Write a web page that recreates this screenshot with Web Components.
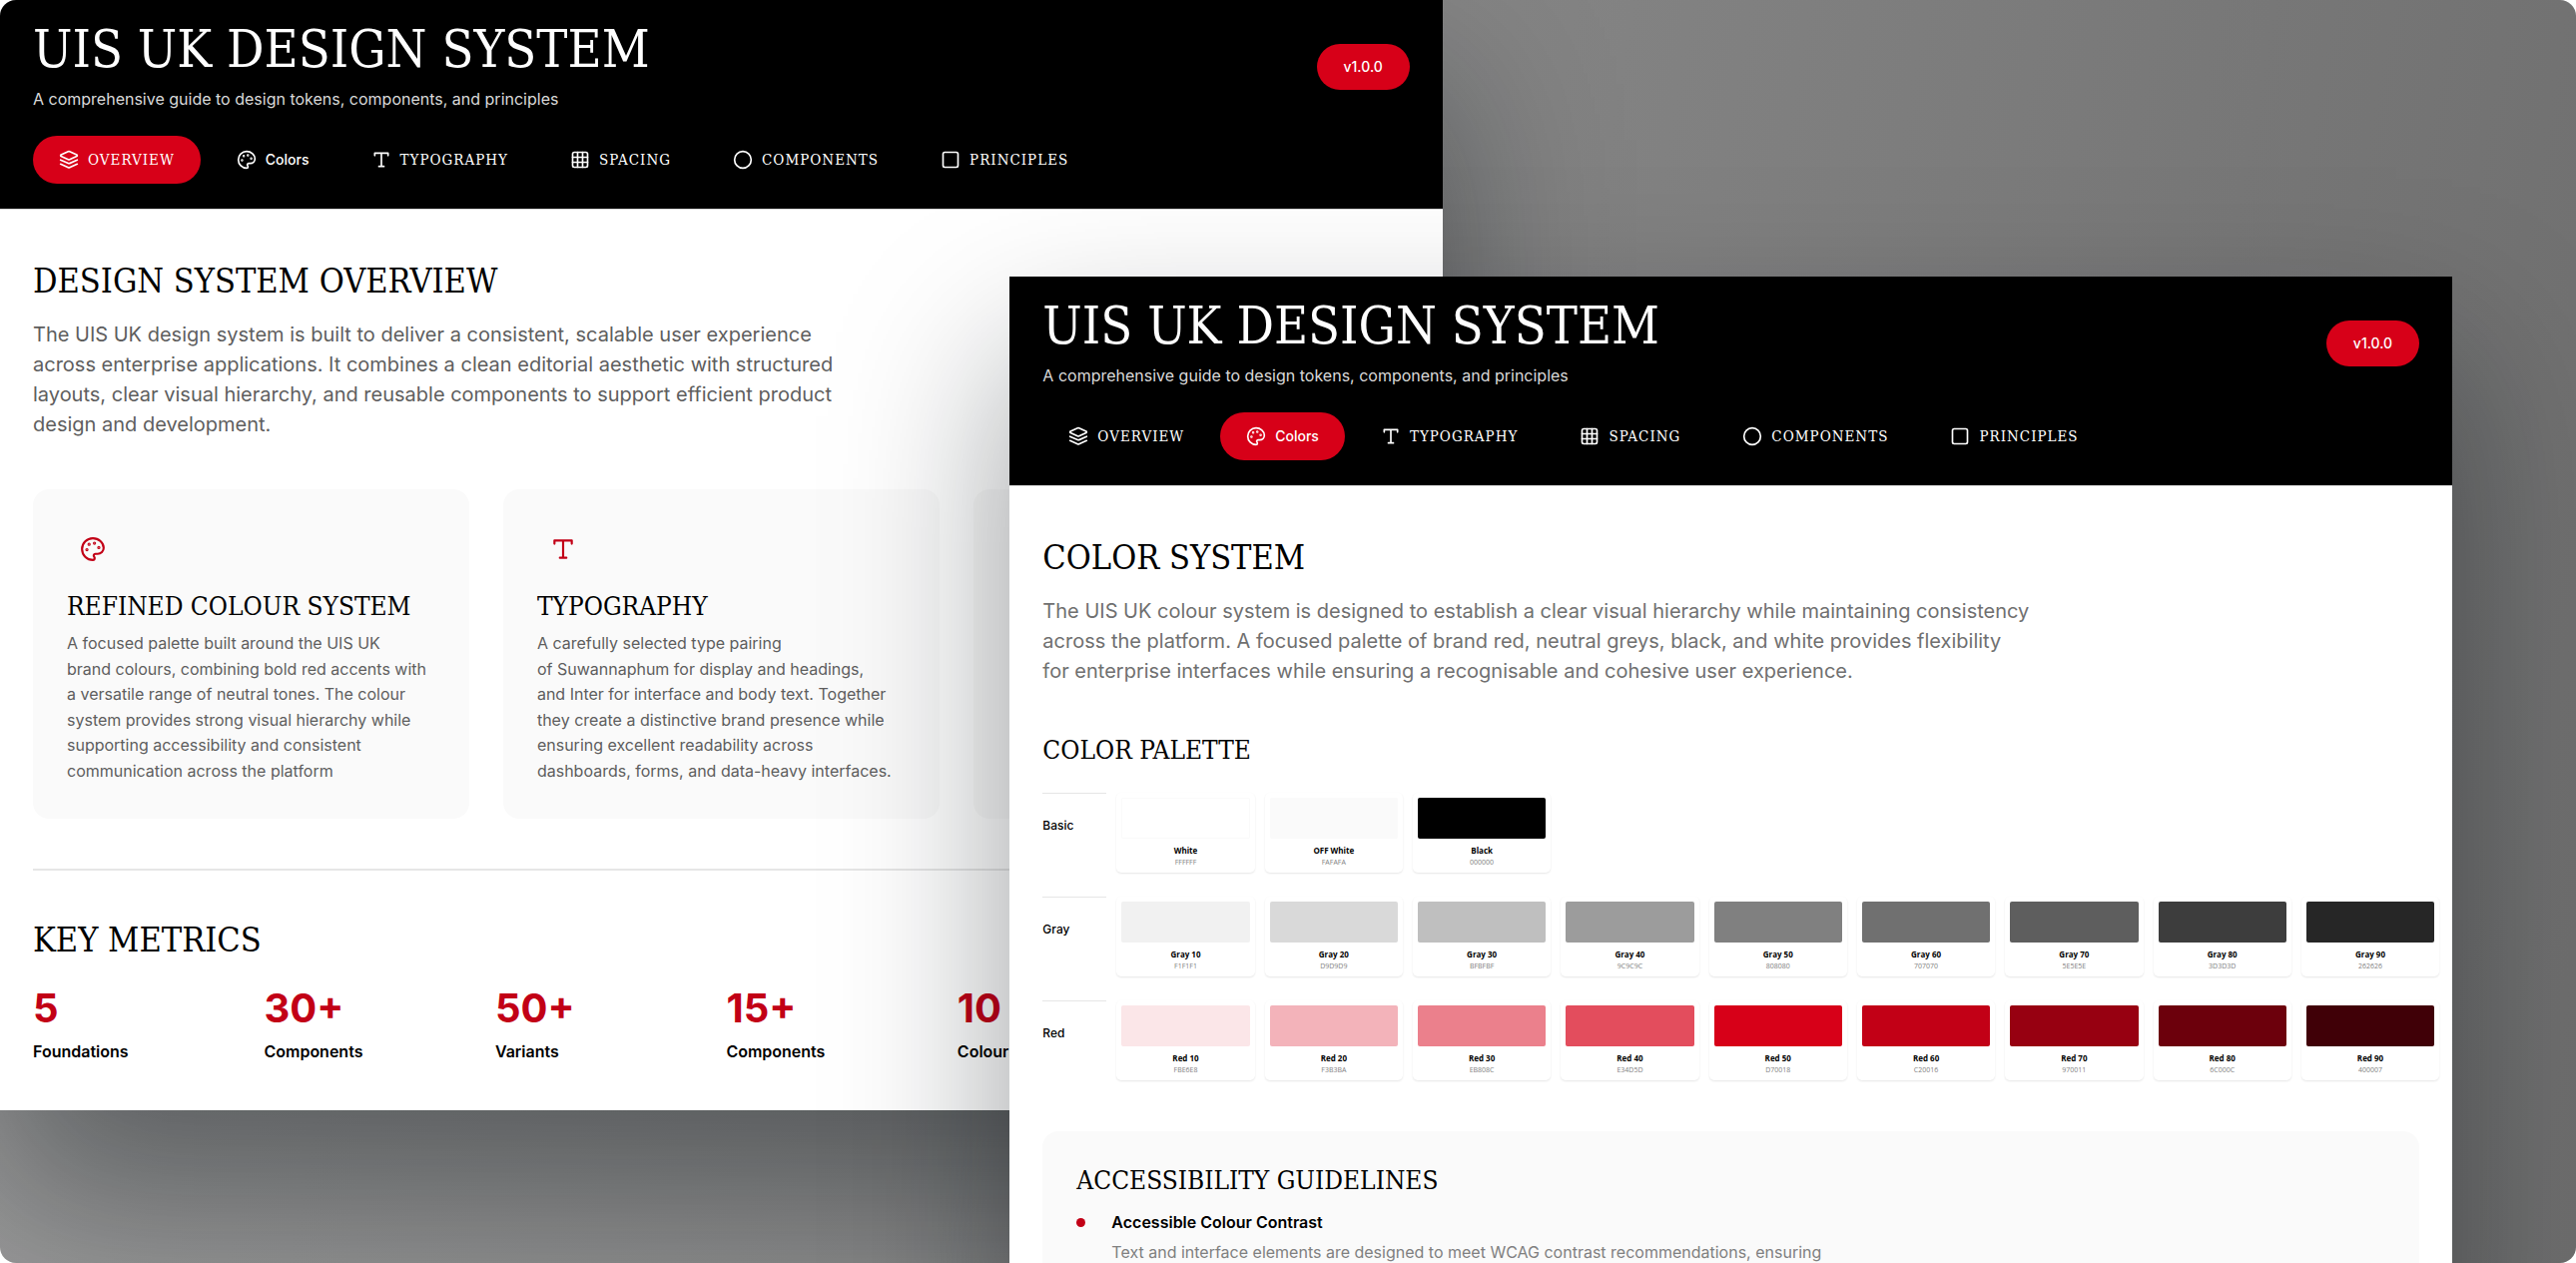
<!DOCTYPE html>
<html lang="en">
<head>
<meta charset="utf-8">
<title>UIS UK Design System</title>
<style>
html, body {
  margin: 0;
  height: 100%;
  background: #FFFFFF;
}

body {
  --slab: "DejaVu Serif Condensed", "DejaVu Serif", serif;
  --red: #D70018;
  --red-dark: #C20016;
  font-family: Inter, "Liberation Sans", sans-serif;
  color: #000000;
}
</style>
</head>
<body>

<ds-stage>
  <ds-window class="back">
    <ds-header active="overview"></ds-header>
    <ds-body>
      <ds-intro heading="DESIGN SYSTEM OVERVIEW">The UIS UK design system is built to deliver a consistent, scalable user experience across enterprise applications. It combines a clean editorial aesthetic with structured layouts, clear visual hierarchy, and reusable components to support efficient product design and development.</ds-intro>
      <ds-features>
        <ds-feature icon="palette" heading="REFINED COLOUR SYSTEM">A focused palette built around the UIS UK brand&nbsp;colours, combining bold red accents with a&nbsp;versatile range of neutral tones. The colour system provides strong visual hierarchy while supporting accessibility and consistent communication across the platform</ds-feature>
        <ds-feature icon="type" heading="TYPOGRAPHY">A carefully selected type pairing of&nbsp;Suwannaphum for display and headings, and&nbsp;Inter for interface and body text. Together they create a distinctive brand presence while ensuring excellent readability across dashboards, forms, and data-heavy interfaces.</ds-feature>
        <ds-feature icon="grid"></ds-feature>
      </ds-features>
      <ds-metrics heading="KEY METRICS">
        <ds-metric value="5">Foundations</ds-metric>
        <ds-metric value="30+">Components</ds-metric>
        <ds-metric value="50+">Variants</ds-metric>
        <ds-metric value="15+">Components</ds-metric>
        <ds-metric value="10">Colours</ds-metric>
      </ds-metrics>
    </ds-body>
  </ds-window>

  <ds-window class="front">
    <ds-header active="colors"></ds-header>
    <ds-body>
      <ds-intro wide heading="COLOR SYSTEM">The UIS UK colour system is designed to establish a clear visual hierarchy while maintaining consistency across the platform. A focused palette of brand red, neutral greys, black, and white provides flexibility for&nbsp;enterprise interfaces while ensuring a recognisable and cohesive user experience.</ds-intro>
      <ds-palette heading="COLOR PALETTE">
        <ds-palette-row label="Basic" colors="White:FFFFFF,OFF White:FAFAFA,Black:000000"></ds-palette-row>
        <ds-palette-row label="Gray" colors="Gray 10:F1F1F1,Gray 20:D9D9D9,Gray 30:BFBFBF,Gray 40:9C9C9C,Gray 50:808080,Gray 60:707070,Gray 70:5E5E5E,Gray 80:3D3D3D,Gray 90:262626"></ds-palette-row>
        <ds-palette-row label="Red" colors="Red 10:FBE6E8,Red 20:F3B3BA,Red 30:EB808C,Red 40:E34D5D,Red 50:D70018,Red 60:C20016,Red 70:970011,Red 80:6C000C,Red 90:400007"></ds-palette-row>
      </ds-palette>
      <ds-guidelines heading="ACCESSIBILITY GUIDELINES">
        <ds-guideline heading="Accessible Colour Contrast">Text and interface elements are designed to meet WCAG contrast recommendations, ensuring</ds-guideline>
      </ds-guidelines>
    </ds-body>
  </ds-window>
</ds-stage>

<script>
const ICONS = {
  layers: '<path d="m12.83 2.18a2 2 0 0 0-1.66 0L2.6 6.08a1 1 0 0 0 0 1.83l8.58 3.91a2 2 0 0 0 1.66 0l8.58-3.9a1 1 0 0 0 0-1.83Z"/><path d="m22 12.18-9.17 4.16a2 2 0 0 1-1.66 0L2 12.18"/><path d="m22 17.18-9.17 4.16a2 2 0 0 1-1.66 0L2 17.18"/>',
  palette: '<path d="M12 2C6.5 2 2 6.5 2 12s4.5 10 10 10c.93 0 1.65-.75 1.65-1.69 0-.44-.18-.84-.44-1.13-.29-.29-.44-.65-.44-1.13a1.64 1.64 0 0 1 1.67-1.67h2c3.05 0 5.55-2.5 5.55-5.55C21.97 6.01 17.46 2 12 2Z"/><g fill="currentColor"><circle cx="13.5" cy="6.5" r=".5"/><circle cx="17.5" cy="10.5" r=".5"/><circle cx="8.5" cy="7.5" r=".5"/><circle cx="6.5" cy="12.5" r=".5"/></g>',
  type: '<path d="M4 7V4h16v3M9 20h6M12 4v16"/>',
  grid: '<rect x="3" y="3" width="18" height="18" rx="2"/><path d="M3 9h18M3 15h18M9 3v18M15 3v18"/>',
  circle: '<circle cx="12" cy="12" r="10"/>',
  square: '<rect x="3" y="3" width="18" height="18" rx="2"/>'
}

const NAV = [
  { id: 'overview', icon: 'layers', label: 'OVERVIEW' },
  { id: 'colors', icon: 'palette', label: 'Colors', plain: true },
  { id: 'typography', icon: 'type', label: 'TYPOGRAPHY' },
  { id: 'spacing', icon: 'grid', label: 'SPACING' },
  { id: 'components', icon: 'circle', label: 'COMPONENTS' },
  { id: 'principles', icon: 'square', label: 'PRINCIPLES' }
]

// Shared base: opens a shadow root and fills it from view()
class DsElement extends HTMLElement {
  constructor() {
    super()
    this.attachShadow({ mode: 'open' })
  }

  connectedCallback() {
    this.shadowRoot.innerHTML = this.view()
  }

  attr(name) {
    return this.getAttribute(name) || ''
  }
}

class DsIcon extends DsElement {
  view() {
    return `
<style>
:host { display: block; flex: none; width: var(--icon-size, 20px); height: var(--icon-size, 20px); }
svg { display: block; width: 100%; height: 100%; }
</style>
<svg viewBox="0 0 24 24" fill="none" stroke="currentColor" stroke-width="2" stroke-linecap="round" stroke-linejoin="round" aria-hidden="true">${ICONS[this.attr('name')]}</svg>`
  }
}

class DsStage extends DsElement {
  view() {
    return `
<style>
:host {
  display: block;
  position: relative;
  height: 100vh;
  overflow: hidden;
  border-radius: 16px;
  background: linear-gradient(100deg, #9C9C9C 0%, #868686 50%, #6E6E6E 100%);
}
::slotted(.back) {
  position: absolute;
  left: 0;
  top: 0;
  width: 56%;
}
::slotted(.front) {
  position: absolute;
  left: 39.2%;
  top: 277px;
  width: 56%;
}
</style>
<slot></slot>`
  }
}

class DsWindow extends DsElement {
  view() {
    return `
<style>
:host {
  display: block;
  background: #FFFFFF;
  box-shadow: 0 84px 160px rgba(8, 14, 20, .4);
}
</style>
<slot></slot>`
  }
}

class DsHeader extends DsElement {
  view() {
    const active = this.attr('active')
    const links = NAV.map(n => `
    <a href="#${n.id}" class="${n.id === active ? 'active' : ''} ${n.plain ? 'plain' : ''}"><ds-icon name="${n.icon}"></ds-icon>${n.label}</a>`).join('')

    return `
<style>
:host {
  display: block;
  background: #000000;
  color: #FFFFFF;
  padding: 20px 33px 25px;
  border-bottom: 1px solid #D9D9D9;
}
.top {
  display: flex;
  align-items: center;
  justify-content: space-between;
}
h1 {
  margin: 0;
  font: 400 52px/58px var(--slab);
}
p {
  margin: 6px 0 0;
  font-size: 16px;
  line-height: 30px;
  color: #D9D9D9;
}
.version {
  padding: 0 27px;
  border-radius: 24px;
  background: var(--red);
  font-size: 14px;
  font-weight: 500;
  line-height: 46px;
}
nav {
  display: flex;
  gap: 10px;
  margin-top: 22px;
}
a {
  display: flex;
  align-items: center;
  gap: 9px;
  height: 48px;
  padding: 0 26px;
  border-radius: 24px;
  color: inherit;
  text-decoration: none;
  font: 400 15px/20px var(--slab);
  letter-spacing: 1px;
}
a.plain {
  font-family: inherit;
  font-size: 14px;
  font-weight: 500;
  letter-spacing: normal;
}
a.active {
  background: var(--red);
}
</style>
<div class="top">
  <div>
    <h1>UIS UK DESIGN SYSTEM</h1>
    <p>A comprehensive guide to design tokens, components, and principles</p>
  </div>
  <span class="version">v1.0.0</span>
</div>
<nav>${links}
</nav>`
  }
}

class DsBody extends DsElement {
  view() {
    return `
<style>
:host { display: block; padding: 48px 33px 46px; }
</style>
<slot></slot>`
  }
}

class DsIntro extends DsElement {
  view() {
    return `
<style>
:host { display: block; }
h2 { margin: 0; font: 400 34px/46px var(--slab); }
p { margin: 16px 0 0; max-width: 840px; font-size: 20px; line-height: 30px; color: #5E5E5E; }
:host([wide]) p { max-width: 1004px; color: #707070; }
</style>
<h2>${this.attr('heading')}</h2>
<p><slot></slot></p>`
  }
}

class DsFeatures extends DsElement {
  view() {
    return `
<style>
:host { display: grid; grid-template-columns: repeat(3, 1fr); gap: 34px; margin-top: 50px; }
</style>
<slot></slot>`
  }
}

class DsFeature extends DsElement {
  view() {
    return `
<style>
:host {
  display: block;
  padding: 34px;
  border-radius: 16px;
  background: #FAFAFA;
}
.icon {
  --icon-size: 26px;
  display: grid;
  place-items: center;
  width: 52px;
  height: 52px;
  color: var(--red-dark);
}
h3 { margin: 14px 0 0; font: 400 26px/34px var(--slab); white-space: nowrap; }
p { margin: 8px 0 0; font-size: 16px; line-height: 1.6; color: #5E5E5E; }
</style>
<div class="icon"><ds-icon name="${this.attr('icon')}"></ds-icon></div>
<h3>${this.attr('heading')}</h3>
<p><slot></slot></p>`
  }
}

class DsMetrics extends DsElement {
  view() {
    return `
<style>
:host { display: block; margin-top: 50px; padding-top: 46px; border-top: 2px solid #E6E6E6; }
h2 { margin: 0; font: 400 34px/46px var(--slab); }
.row { display: grid; grid-template-columns: repeat(6, 1fr); gap: 10px; margin-top: 22px; }
</style>
<h2>${this.attr('heading')}</h2>
<div class="row"><slot></slot></div>`
  }
}

class DsMetric extends DsElement {
  view() {
    return `
<style>
:host { display: block; font-size: 16px; font-weight: 600; line-height: 26px; }
strong { display: block; margin-bottom: 6px; font-size: 40px; font-weight: 700; line-height: 48px; color: var(--red-dark); }
</style>
<strong>${this.attr('value')}</strong>
<slot></slot>`
  }
}

class DsPalette extends DsElement {
  view() {
    return `
<style>
:host { display: flex; flex-direction: column; gap: 24px; margin: 48px -20px 0 0; }
h3 { margin: 0 0 3px; font: 400 26px/32px var(--slab); }
</style>
<h3>${this.attr('heading')}</h3>
<slot></slot>`
  }
}

class DsPaletteRow extends DsElement {
  view() {
    const cards = this.attr('colors').split(',').map(entry => {
      const [name, hex] = entry.split(':')
      return `<ds-swatch name="${name}" hex="${hex}"></ds-swatch>`
    }).join('')

    return `
<style>
:host { display: grid; grid-template-columns: 64px repeat(9, 1fr); gap: 10px; }
.label { border-top: 1px solid #E6E6E6; padding-top: 24px; font-size: 12px; font-weight: 500; line-height: 16px; }
</style>
<div class="label">${this.attr('label')}</div>${cards}`
  }
}

class DsSwatch extends DsElement {
  view() {
    return `
<style>
:host {
  display: block;
  box-sizing: border-box;
  padding: 5px 5px 4px;
  border-radius: 5px;
  background: #FFFFFF;
  box-shadow: 0 1px 2px rgba(0, 0, 0, .1);
  font-family: "Open Sans", sans-serif;
  text-align: center;
}
.chip { height: 41px; border-radius: 2px; background: #${this.attr('hex')}; }
:host([hex="FFFFFF"]) .chip { box-shadow: inset 0 0 0 1px #FAFAFA; }
.name { margin-top: 6px; font-size: 8px; font-weight: 700; line-height: 12px; }
.hex { font-size: 7px; line-height: 12px; color: #808080; }
</style>
<div class="chip"></div>
<div class="name">${this.attr('name')}</div>
<div class="hex">${this.attr('hex')}</div>`
  }
}

class DsGuidelines extends DsElement {
  view() {
    return `
<style>
:host { display: block; margin-top: 51px; padding: 32px 34px; border-radius: 16px; background: #FAFAFA; }
h3 { margin: 0 0 12px; font: 400 26px/34px var(--slab); }
</style>
<h3>${this.attr('heading')}</h3>
<slot></slot>`
  }
}

class DsGuideline extends DsElement {
  view() {
    return `
<style>
:host { display: grid; grid-template-columns: 9px 1fr; gap: 26px; }
i { width: 9px; height: 9px; margin-top: 9px; border-radius: 50%; background: var(--red-dark); }
h4 { margin: 0; font-size: 16px; font-weight: 600; line-height: 26px; }
p { margin: 4px 0 0; font-size: 16px; line-height: 26px; color: #808080; }
</style>
<i></i>
<div>
  <h4>${this.attr('heading')}</h4>
  <p><slot></slot></p>
</div>`
  }
}

customElements.define('ds-icon', DsIcon)
customElements.define('ds-stage', DsStage)
customElements.define('ds-window', DsWindow)
customElements.define('ds-header', DsHeader)
customElements.define('ds-body', DsBody)
customElements.define('ds-intro', DsIntro)
customElements.define('ds-features', DsFeatures)
customElements.define('ds-feature', DsFeature)
customElements.define('ds-metrics', DsMetrics)
customElements.define('ds-metric', DsMetric)
customElements.define('ds-palette', DsPalette)
customElements.define('ds-palette-row', DsPaletteRow)
customElements.define('ds-swatch', DsSwatch)
customElements.define('ds-guidelines', DsGuidelines)
customElements.define('ds-guideline', DsGuideline)
</script>
</body>
</html>
